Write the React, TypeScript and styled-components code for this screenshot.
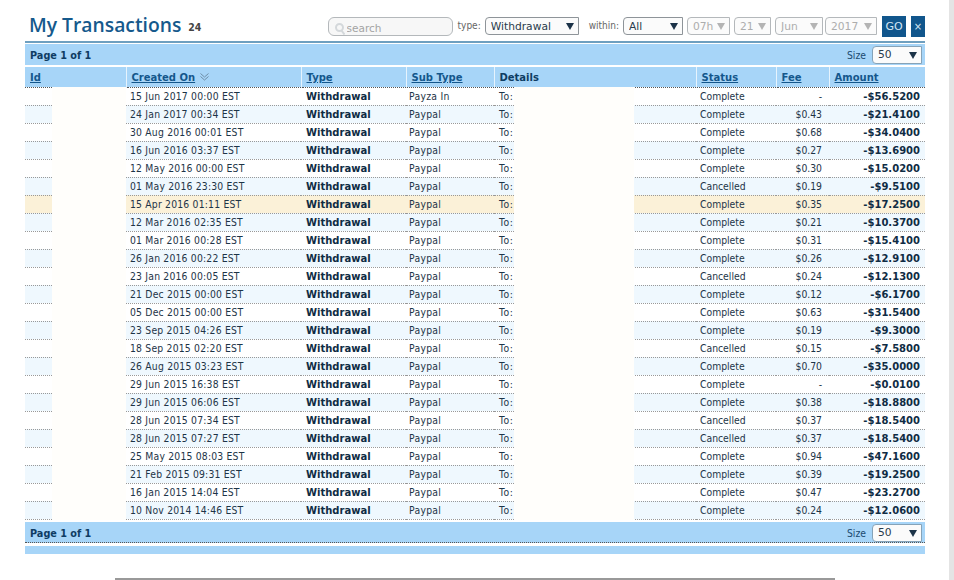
import React from "react";
import styled, { createGlobalStyle } from "styled-components";

type Row = [string, string, string, string, string];

const ROWS: Row[] = [
  ["15 Jun 2017 00:00 EST", "Payza In", "Complete", "-", "-$56.5200"],
  ["24 Jan 2017 00:34 EST", "Paypal", "Complete", "$0.43", "-$21.4100"],
  ["30 Aug 2016 00:01 EST", "Paypal", "Complete", "$0.68", "-$34.0400"],
  ["16 Jun 2016 03:37 EST", "Paypal", "Complete", "$0.27", "-$13.6900"],
  ["12 May 2016 00:00 EST", "Paypal", "Complete", "$0.30", "-$15.0200"],
  ["01 May 2016 23:30 EST", "Paypal", "Cancelled", "$0.19", "-$9.5100"],
  ["15 Apr 2016 01:11 EST", "Paypal", "Complete", "$0.35", "-$17.2500"],
  ["12 Mar 2016 02:35 EST", "Paypal", "Complete", "$0.21", "-$10.3700"],
  ["01 Mar 2016 00:28 EST", "Paypal", "Complete", "$0.31", "-$15.4100"],
  ["26 Jan 2016 00:22 EST", "Paypal", "Complete", "$0.26", "-$12.9100"],
  ["23 Jan 2016 00:05 EST", "Paypal", "Cancelled", "$0.24", "-$12.1300"],
  ["21 Dec 2015 00:00 EST", "Paypal", "Complete", "$0.12", "-$6.1700"],
  ["05 Dec 2015 00:00 EST", "Paypal", "Complete", "$0.63", "-$31.5400"],
  ["23 Sep 2015 04:26 EST", "Paypal", "Complete", "$0.19", "-$9.3000"],
  ["18 Sep 2015 02:20 EST", "Paypal", "Cancelled", "$0.15", "-$7.5800"],
  ["26 Aug 2015 03:23 EST", "Paypal", "Complete", "$0.70", "-$35.0000"],
  ["29 Jun 2015 16:38 EST", "Paypal", "Complete", "-", "-$0.0100"],
  ["29 Jun 2015 06:06 EST", "Paypal", "Complete", "$0.38", "-$18.8800"],
  ["28 Jun 2015 07:34 EST", "Paypal", "Cancelled", "$0.37", "-$18.5400"],
  ["28 Jun 2015 07:27 EST", "Paypal", "Cancelled", "$0.37", "-$18.5400"],
  ["25 May 2015 08:03 EST", "Paypal", "Complete", "$0.94", "-$47.1600"],
  ["21 Feb 2015 09:31 EST", "Paypal", "Complete", "$0.39", "-$19.2500"],
  ["16 Jan 2015 14:04 EST", "Paypal", "Complete", "$0.47", "-$23.2700"],
  ["10 Nov 2014 14:46 EST", "Paypal", "Complete", "$0.24", "-$12.0600"],
];

const GlobalStyle = createGlobalStyle`
  html, body {
    margin: 0;
    padding: 0;
    background: #fff;
    overflow: hidden;
  }
  body {
    font-family: "DejaVu Sans", Verdana, sans-serif;
    font-size: 10px;
    color: #1c3d57;
  }
`;

function Dropdown({
  value,
  width,
  gap = 4,
  disabled,
}: {
  value: string;
  width: number;
  gap?: number;
  disabled?: boolean;
}) {
  return (
    <SelectWrap $width={width} $gap={gap}>
      <Select defaultValue={value} disabled={disabled}>
        <option>{value}</option>
      </Select>
      <Arrow $disabled={disabled} />
    </SelectWrap>
  );
}

function PagerBar({ bottom }: { bottom?: boolean }) {
  return (
    <Pager $bottom={bottom}>
      <PageLabel>Page 1 of 1</PageLabel>
      <SizeGroup>
        <SizeLabel>Size</SizeLabel>
        <Dropdown value="50" width={50} gap={0} />
      </SizeGroup>
    </Pager>
  );
}

export default function App() {
  return (
    <Page>
      <GlobalStyle />
      <TopBar>
        <Title>
          My Transactions<Count>24</Count>
        </Title>
        <Filters>
          <SearchBox>
            <SearchIcon width="10" height="12" viewBox="0 0 10 12" fill="none" stroke="#d4d8db" strokeWidth="2">
              <circle cx="4.5" cy="4.5" r="3.5" />
              <path d="M6.5 7.5l3 4" />
            </SearchIcon>
            <SearchInput placeholder="search" />
          </SearchBox>
          <TypeLabel>type:</TypeLabel>
          <Dropdown value="Withdrawal" width={94} gap={10} />
          <WithinLabel>within:</WithinLabel>
          <Dropdown value="All" width={60} />
          <Dropdown value="07h" width={43} disabled />
          <Dropdown value="21" width={37} disabled />
          <Dropdown value="Jun" width={48} gap={2} disabled />
          <Dropdown value="2017" width={52} gap={5} disabled />
          <GoButton>GO</GoButton>
          <ClearButton>×</ClearButton>
        </Filters>
      </TopBar>

      <TableFrame>
        <PagerBar />
        <Table>
          <colgroup>
            <col width="101" />
            <col width="175" />
            <col width="105" />
            <col width="88" />
            <col width="202" />
            <col width="80" />
            <col width="53" />
            <col width="96" />
          </colgroup>
          <thead>
            <tr>
              <Th><HeadLink>Id</HeadLink></Th>
              <Th>
                <HeadLink>Created On</HeadLink>
                <SortIcon width="9" height="8" viewBox="0 0 9 8" fill="none" stroke="#6f8fa8">
                  <path d="M.5 .5l4 3.5 4-3.5M.5 3.5l4 3.5 4-3.5" />
                </SortIcon>
              </Th>
              <Th><HeadLink>Type</HeadLink></Th>
              <Th><HeadLink>Sub Type</HeadLink></Th>
              <Th>Details</Th>
              <Th><HeadLink>Status</HeadLink></Th>
              <Th><HeadLink>Fee</HeadLink></Th>
              <Th><HeadLink>Amount</HeadLink></Th>
            </tr>
          </thead>
          <tbody>
            {ROWS.map((row, idx) => (
              <Tr key={idx} $alt={idx % 2 === 1} $active={idx === 6}>
                <Td />
                <DateCell>{row[0]}</DateCell>
                <TypeCell>Withdrawal</TypeCell>
                <SubTypeCell>{row[1]}</SubTypeCell>
                <DetailsCell>To:</DetailsCell>
                <Td>{row[2]}</Td>
                <FeeCell>{row[3]}</FeeCell>
                <AmountCell>{row[4]}</AmountCell>
              </Tr>
            ))}
          </tbody>
        </Table>
        <Redacted $left={27} $width={74} />
        <Redacted $left={489} $width={120} />
        <PagerBar bottom />
        <EndBar />
      </TableFrame>
      <FooterRule />
      <ScrollEdge />
    </Page>
  );
}

const Page = styled.div`
  width: 900px;
  height: 580px;
  margin-left: 25px;
  overflow: hidden;
`;

const TopBar = styled.div`
  display: flex;
  align-items: flex-start;
  justify-content: space-between;
  height: 41px;
  padding-top: 16px;
  box-sizing: border-box;
`;

const Title = styled.h1`
  margin: -1px 0 0 4px;
  font-family: "Open Sans", sans-serif;
  font-size: 19.3px;
  line-height: 20px;
  font-weight: 600;
  color: #15598c;
  white-space: nowrap;
`;

const Count = styled.span`
  position: relative;
  top: -1px;
  margin-left: 7px;
  font-family: "DejaVu Sans Condensed", "DejaVu Sans", sans-serif;
  font-size: 10.5px;
  font-weight: 700;
  color: #444;
`;

const Filters = styled.div`
  display: flex;
  align-items: flex-start;
  height: 21px;
`;

const SearchBox = styled.div`
  display: flex;
  align-items: center;
  gap: 2px;
  box-sizing: border-box;
  width: 125px;
  height: 19px;
  margin-top: 1px;
  padding: 2px 0 0 6px;
  border: 1px solid #b4b8bb;
  border-radius: 6px;
  background: #f7f7f7;
`;

const SearchIcon = styled.svg`
  flex: none;
  margin-top: 2px;
`;

const SearchInput = styled.input`
  width: 90px;
  border: 0;
  outline: 0;
  padding: 0;
  background: transparent;
  font-family: "DejaVu Sans", sans-serif;
  font-size: 10.5px;
  &::placeholder {
    color: #a4a4a4;
    opacity: 1;
  }
`;

const TypeLabel = styled.span`
  margin: 3px 4px 0 5px;
  font-family: "DejaVu Sans Condensed", "DejaVu Sans", sans-serif;
  font-size: 10px;
  line-height: 14px;
  color: #666;
`;

const WithinLabel = styled(TypeLabel)`
  margin-left: 0;
`;

const SelectWrap = styled.div<{ $width: number; $gap: number }>`
  position: relative;
  width: ${(p) => p.$width}px;
  height: 18px;
  margin: 1px ${(p) => p.$gap}px 0 0;
  flex: none;
`;

const Select = styled.select`
  appearance: none;
  display: block;
  width: 100%;
  height: 100%;
  box-sizing: border-box;
  padding: 0 0 0 5px;
  border: 1px solid #8e9499;
  border-radius: 4px 0 0 4px;
  background: #fbfbfb;
  font-family: "DejaVu Sans", sans-serif;
  font-size: 10.7px;
  color: #2a3c4b;
  opacity: 1;
  &:disabled {
    border-color: #b4b8bb;
    color: #adadad;
    background: #fbfbfb;
  }
`;

const Arrow = styled.span<{ $disabled?: boolean }>`
  position: absolute;
  top: 6px;
  right: 5px;
  width: 0;
  height: 0;
  border-left: 4px solid transparent;
  border-right: 4px solid transparent;
  border-top: 7px solid ${(p) => (p.$disabled ? "#b4b4b4" : "#1c3348")};
  pointer-events: none;
`;

const GoButton = styled.button`
  width: 24px;
  height: 21px;
  padding: 0;
  border: 0;
  background: #11568c;
  color: #d4e6f4;
  font-family: "DejaVu Sans", sans-serif;
  font-size: 11px;
`;

const ClearButton = styled(GoButton)`
  width: 14px;
  margin-left: 5px;
  font-size: 10px;
`;

const TableFrame = styled.div`
  position: relative;
  border-top: 2px solid #6e9fbf;
`;

const Pager = styled.div<{ $bottom?: boolean }>`
  display: flex;
  align-items: center;
  justify-content: space-between;
  box-sizing: border-box;
  height: 21px;
  margin-top: ${(p) => (p.$bottom ? "2px" : "1px")};
  padding: ${(p) => (p.$bottom ? "2px 3px 0 5px" : "0 3px 0 5px")};
  background: #a7d5f8;
  border-bottom: ${(p) => (p.$bottom ? "1px dotted #555" : "0")};
`;

const PageLabel = styled.strong`
  position: relative;
  top: 1px;
  font-size: 9.7px;
  color: #0e3c63;
`;

const SizeGroup = styled.div`
  display: flex;
  align-items: center;
  ${SelectWrap} {
    margin: 0;
  }
  ${Select} {
    border-color: #86a3b8;
  }
`;

const SizeLabel = styled.span`
  margin-right: 6px;
  font-family: "DejaVu Sans Condensed", "DejaVu Sans", sans-serif;
  font-size: 10.3px;
  color: #1a4a70;
`;

const Table = styled.table`
  display: table;
  width: 900px;
  margin-top: 2px;
  table-layout: fixed;
  border-collapse: collapse;
  border-spacing: 0;
`;

const Th = styled.th`
  height: 20px;
  padding: 1px 0 0 5px;
  box-sizing: border-box;
  background: #a7d5f8;
  border-left: 1px solid #e6f3fd;
  border-bottom: 1px dotted #555;
  text-align: left;
  font-size: 10px;
  font-weight: 700;
  color: #0e3c63;
  white-space: nowrap;
  &:first-child {
    border-left: 0;
  }
`;

const HeadLink = styled.a`
  color: #14578c;
  text-decoration: underline;
  cursor: pointer;
`;

const SortIcon = styled.svg`
  margin-left: 5px;
`;

const Tr = styled.tr<{ $alt: boolean; $active: boolean }>`
  background: ${(p) => (p.$active ? "#fbf1d8" : p.$alt ? "#eff8fe" : "#fff")};
`;

const Td = styled.td`
  height: 18px;
  padding: 0 0 0 4px;
  box-sizing: border-box;
  border-bottom: 1px dotted #999;
  font-family: "DejaVu Sans Condensed", "DejaVu Sans", sans-serif;
  font-size: 10.3px;
  color: #1d3447;
  white-space: nowrap;
`;

const DateCell = styled(Td)`
  letter-spacing: 0.2px;
`;

const SubTypeCell = styled(Td)`
  padding-left: 3px;
  letter-spacing: 0.3px;
`;

const DetailsCell = styled(Td)`
  padding-left: 5px;
  letter-spacing: 0.6px;
`;

const TypeCell = styled(Td)`
  padding-left: 5px;
  font-family: "DejaVu Sans", sans-serif;
  font-size: 10px;
  font-weight: 700;
  color: #0f2c44;
`;

const FeeCell = styled(Td)`
  text-align: right;
  padding: 0 7px 0 0;
`;

const AmountCell = styled(TypeCell)`
  text-align: right;
  padding: 0 5px 0 0;
`;

const Redacted = styled.div<{ $left: number; $width: number }>`
  position: absolute;
  top: 44px;
  left: ${(p) => p.$left}px;
  width: ${(p) => p.$width}px;
  height: 433px;
  background: #fffefb;
`;

const EndBar = styled.div`
  height: 8px;
  margin-top: 3px;
  background: #a7d5f8;
`;

const FooterRule = styled.div`
  width: 720px;
  margin: 24px 0 0 90px;
  border-top: 2px solid #999;
`;

const ScrollEdge = styled.div`
  position: fixed;
  top: 0;
  right: 0;
  width: 5px;
  height: 100%;
  background: #e4e4e4;
`;
